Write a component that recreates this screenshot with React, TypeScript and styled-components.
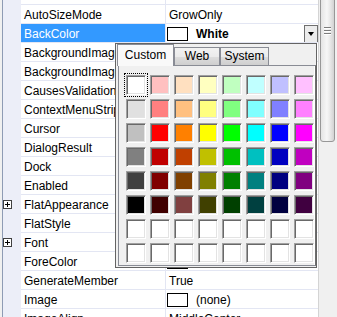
import React from "react";
import styled, { createGlobalStyle } from "styled-components";

const GlobalStyle = createGlobalStyle`
  html, body {
    margin: 0;
    padding: 0;
    background: #f0f0f0;
  }

  body {
    font-family: "Liberation Sans", Arial, sans-serif;
    font-size: 12px;
    color: #000;
  }
`;

const Frame = styled.div`
  position: relative;
  display: flex;
  width: 337px;
  height: 317px;
  overflow: hidden;
`;

const GridArea = styled.div`
  width: 317px;
  padding-left: 2px;
  background: #f0f0f0;
`;

const Rows = styled.div`
  margin-top: -14px;
`;

const Row = styled.div`
  display: grid;
  grid-template-columns: 19px 144px 1fr;
  height: 19px;
`;

const Gutter = styled.div`
  border-left: 1px solid #8e9bb4;
  background: #eceef8;
  display: flex;
  align-items: center;
`;

const Expander = styled.div`
  position: relative;
  width: 9px;
  height: 9px;
  box-sizing: border-box;
  border: 1px solid #404040;
  background: #fff;

  &::before {
    content: "";
    position: absolute;
    left: 1px;
    top: 3px;
    width: 5px;
    height: 1px;
    background: #000;
  }

  &::after {
    content: "";
    position: absolute;
    left: 3px;
    top: 1px;
    width: 1px;
    height: 5px;
    background: #000;
  }
`;

const Name = styled.div<{ $selected?: boolean }>`
  height: 18px;
  line-height: 20px;
  padding-left: 3px;
  border-bottom: 1px solid #e3e6f3;
  white-space: nowrap;
  overflow: hidden;
  background: ${({ $selected }) => ($selected ? "#3399ff" : "#fff")};
  color: ${({ $selected }) => ($selected ? "#fff" : "#000")};
`;

const Value = styled.div`
  display: flex;
  align-items: flex-start;
  height: 18px;
  line-height: 20px;
  padding-left: 1px;
  border-left: 1px solid #e3e6f3;
  border-bottom: 1px solid #e3e6f3;
  background: #fff;
  white-space: nowrap;
  overflow: hidden;
`;

const ValueText = styled.span<{ $bold?: boolean }>`
  padding-left: 2px;
  font-weight: ${({ $bold }) => ($bold ? "bold" : "normal")};
  flex: 1;
`;

const Swatch = styled.span`
  flex: none;
  width: 21px;
  height: 14px;
  margin-top: 3px;
  margin-right: 6px;
  box-sizing: border-box;
  border: 1px solid #000;
  background: #fff;
`;

const DropButton = styled.span`
  flex: none;
  display: flex;
  align-items: center;
  justify-content: center;
  width: 14px;
  height: 18px;
  box-sizing: border-box;
  border: 1px solid #6f6f6f;
  background: #ececec;
  margin-top: 1px;
`;

const Arrow = styled.span`
  width: 0;
  height: 0;
  border-left: 3px solid transparent;
  border-right: 3px solid transparent;
  border-top: 4px solid #000;
`;

const ScrollBar = styled.div`
  width: 17px;
  border-left: 1px solid #d4d4d4;
  background: #f0f0f0;
  padding-left: 1px;
`;

const Thumb = styled.div`
  width: 15px;
  height: 152px;
  margin-top: -10px;
  box-sizing: border-box;
  border: 1px solid #979797;
  border-radius: 3px;
  background: linear-gradient(to right, #e4e4e4, #f6f6f6 45%, #e8e8e8 70%, #d2d2d2);
  display: flex;
  flex-direction: column;
  align-items: center;
  padding-top: 36px;
  gap: 2px;
`;

const Grip = styled.span`
  width: 7px;
  height: 1px;
  background: #7c7c7c;
  box-shadow: 0 1px 0 #fff;
`;

const Popup = styled.div`
  position: absolute;
  left: 115px;
  top: 43px;
  width: 202px;
  height: 225px;
  box-sizing: border-box;
  border: 1px solid #646464;
  background: #f0f0f0;
  padding-left: 1px;
`;

const TabStrip = styled.div`
  display: flex;
  align-items: flex-end;
  height: 22px;
  margin-bottom: -1px;
  position: relative;
  z-index: 1;
`;

const Tab = styled.div<{ $active?: boolean; $width: number }>`
  width: ${({ $width }) => $width}px;
  height: ${({ $active }) => ($active ? "22px" : "19px")};
  box-sizing: border-box;
  border: 1px solid #898c95;
  border-bottom: ${({ $active }) => ($active ? "none" : "1px solid #898c95")};
  background: ${({ $active }) =>
    $active ? "#f9f9f9" : "linear-gradient(#f2f2f2, #ebebeb 50%, #dddddd 51%, #cfcfcf)"};
  text-align: center;
  line-height: ${({ $active }) => ($active ? "21px" : "17px")};
`;

const Panel = styled.div`
  margin-left: 1px;
  width: 198px;
  height: 201px;
  box-sizing: border-box;
  border: 1px solid #898c95;
  border-right-color: #6e6e6e;
  box-shadow: inset -1px 0 0 #fff;
  background: #f0f0f0;
  padding: 9px 0 0 7px;
`;

const ColorGrid = styled.div`
  display: grid;
  grid-template-columns: repeat(8, 20px);
  grid-auto-rows: 20px;
  gap: 4px;
`;

const Cell = styled.div<{ $focus?: boolean }>`
  box-sizing: border-box;
  border: 1px solid;
  border-color: #a0a0a0 #fff #fff #a0a0a0;
  box-shadow: inset 1px 1px 0 #696969, inset -1px -1px 0 #e3e3e3;
  outline: ${({ $focus }) => ($focus ? "1px dotted #000" : "none")};
  outline-offset: 1px;
`;

const PALETTE = [
  ["#ffffff", "#ffc0c0", "#ffe0c0", "#ffffc0", "#c0ffc0", "#c0ffff", "#c0c0ff", "#ffc0ff"],
  ["#e0e0e0", "#ff8080", "#ffc080", "#ffff80", "#80ff80", "#80ffff", "#8080ff", "#ff80ff"],
  ["#c0c0c0", "#ff0000", "#ff8000", "#ffff00", "#00ff00", "#00ffff", "#0000ff", "#ff00ff"],
  ["#808080", "#c00000", "#c04000", "#c0c000", "#00c000", "#00c0c0", "#0000c0", "#c000c0"],
  ["#404040", "#800000", "#804000", "#808000", "#008000", "#008080", "#000080", "#800080"],
  ["#000000", "#400000", "#804040", "#404000", "#004000", "#004040", "#000040", "#400040"],
  Array(8).fill("#ffffff"),
  Array(8).fill("#ffffff"),
];

interface Property {
  name: string;
  value?: string;
  swatch?: boolean;
  bold?: boolean;
  expandable?: boolean;
  selected?: boolean;
}

// first row is scrolled out of view; values under the open colour popup are not shown
const PROPERTIES: Property[] = [
  { name: "" },
  { name: "AutoSizeMode", value: "GrowOnly" },
  { name: "BackColor", value: "White", swatch: true, bold: true, selected: true },
  { name: "BackgroundImage" },
  { name: "BackgroundImageLayout" },
  { name: "CausesValidation" },
  { name: "ContextMenuStrip" },
  { name: "Cursor" },
  { name: "DialogResult" },
  { name: "Dock" },
  { name: "Enabled" },
  { name: "FlatAppearance", expandable: true },
  { name: "FlatStyle" },
  { name: "Font", expandable: true },
  { name: "ForeColor", swatch: true },
  { name: "GenerateMember", value: "True" },
  { name: "Image", value: "(none)", swatch: true },
  { name: "ImageAlign", value: "MiddleCenter" },
];

const App: React.FC = () => {
  return (
    <>
      <GlobalStyle />
      <Frame>
        <GridArea>
          <Rows>
            {PROPERTIES.map((p, index) => (
              <Row key={index}>
                <Gutter>{p.expandable && <Expander />}</Gutter>
                <Name $selected={p.selected}>{p.name}</Name>
                <Value>
                  {p.swatch && <Swatch />}
                  <ValueText $bold={p.bold}>{p.value}</ValueText>
                  {p.selected && (
                    <DropButton>
                      <Arrow />
                    </DropButton>
                  )}
                </Value>
              </Row>
            ))}
          </Rows>
        </GridArea>

        <ScrollBar>
          <Thumb>
            <Grip />
            <Grip />
            <Grip />
          </Thumb>
        </ScrollBar>

        <Popup>
          <TabStrip>
            <Tab $active $width={57}>Custom</Tab>
            <Tab $width={46}>Web</Tab>
            <Tab $width={49}>System</Tab>
          </TabStrip>
          <Panel>
            <ColorGrid>
              {PALETTE.flatMap((row, r) =>
                row.map((color, c) => (
                  <Cell key={`${r}-${c}`} $focus={r === 0 && c === 0} style={{ background: color }} />
                ))
              )}
            </ColorGrid>
          </Panel>
        </Popup>
      </Frame>
    </>
  );
};

export default App;
